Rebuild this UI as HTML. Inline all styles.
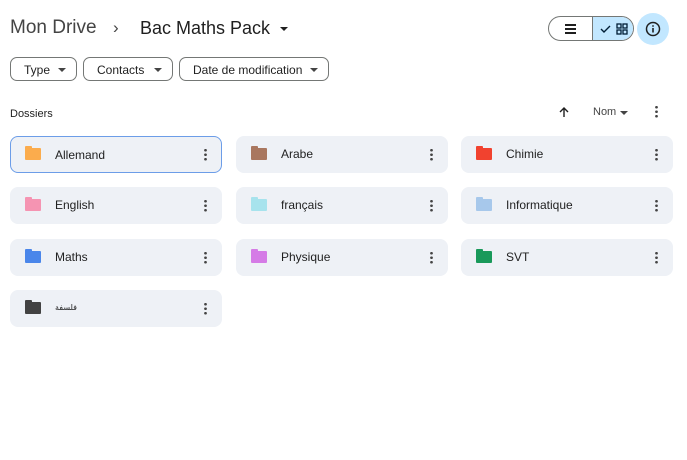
<!DOCTYPE html>
<html><head><meta charset="utf-8"><style>
body{margin:0;width:687px;height:460px;background:#fff;font-family:"Liberation Sans","Noto Sans CJK SC",sans-serif;color:#1f1f1f;position:relative;overflow:hidden}
.a{position:absolute}
.bc{top:17px;font-size:19px;color:#1f1f1f}
.chip{position:absolute;top:57px;height:24px;border:1px solid #747775;border-radius:7px;font-size:12px;line-height:24px;box-sizing:border-box;padding-left:13px;color:#1f1f1f}
.chip:after{content:"";position:absolute;right:10px;top:10px;border:4px solid transparent;border-top:4px solid #444;border-bottom:0}
.card{position:absolute;width:212px;height:37px;background:#eef1f6;border-radius:8px;box-sizing:border-box}
.card .f{position:absolute;left:15px;top:12px;width:16px;height:12px;border-radius:1px}
.card .f:before{content:"";position:absolute;left:0;top:-2px;width:7px;height:3px;background:inherit;border-radius:1px 1px 0 0}
.card .t{position:absolute;left:45px;top:11px;font-size:12px;color:#1f1f1f}
.card .d{position:absolute;right:15px;top:12px;width:3px;height:13px;background:radial-gradient(circle,#444 1.2px,transparent 1.5px) 0 0/3px 4.5px}
</style></head><body>
<div class="a bc" style="left:10px;color:#444">Mon Drive</div>
<div class="a bc" style="left:113px;font-size:17px;top:18px;color:#444">›</div>
<div class="a bc" style="left:140px;font-size:18px;top:18px">Bac Maths Pack</div>
<div class="a" style="left:280px;top:27px;border:4px solid transparent;border-top:4px solid #1f1f1f;border-bottom:0"></div>
<div class="a" style="left:548px;top:16px;width:86px;height:25px;border:1px solid #747775;border-radius:13px;box-sizing:border-box;overflow:hidden">
 <div class="a" style="left:43px;top:0;width:43px;height:25px;background:#c2e7ff;border-left:1px solid #747775"></div>
 <div class="a" style="left:16px;top:7px;width:11px;height:2px;background:#1f1f1f;box-shadow:0 4px 0 #1f1f1f,0 8px 0 #1f1f1f"></div>
 <svg class="a" style="left:51px;top:6px" width="30" height="12"><path d="M1 6l3 3 6-6" fill="none" stroke="#001d35" stroke-width="1.4"/><rect x="17" y="1" width="4" height="4" fill="none" stroke="#001d35" stroke-width="1.3"/><rect x="23" y="1" width="4" height="4" fill="none" stroke="#001d35" stroke-width="1.3"/><rect x="17" y="7" width="4" height="4" fill="none" stroke="#001d35" stroke-width="1.3"/><rect x="23" y="7" width="4" height="4" fill="none" stroke="#001d35" stroke-width="1.3"/></svg>
</div>
<div class="a" style="left:637px;top:13px;width:32px;height:32px;border-radius:50%;background:#c2e7ff"></div>
<svg class="a" style="left:645px;top:21px" width="16" height="16"><circle cx="8" cy="8" r="6.5" fill="none" stroke="#1f1f1f" stroke-width="1.5"/><rect x="7.2" y="7" width="1.6" height="4.5" fill="#1f1f1f"/><circle cx="8" cy="5" r="0.9" fill="#1f1f1f"/></svg>
<div class="chip" style="left:10px;width:67px">Type</div>
<div class="chip" style="left:83px;width:90px">Contacts</div>
<div class="chip" style="left:179px;width:150px">Date de modification</div>
<div class="a" style="left:10px;top:108px;font-size:11px">Dossiers</div>
<svg class="a" style="left:558px;top:106px" width="12" height="12"><path d="M6 11V2M2 6l4-4 4 4" fill="none" stroke="#1f1f1f" stroke-width="1.4"/></svg>
<div class="a" style="left:593px;top:106px;font-size:11px;color:#444">Nom</div>
<div class="a" style="left:620px;top:111px;border:4px solid transparent;border-top:4px solid #444;border-bottom:0"></div>
<div class="a" style="left:655px;top:105px;width:3px;height:13px;background:radial-gradient(circle,#444 1.2px,transparent 1.5px) 0 0/3px 4.5px"></div>

<div class="card" style="left:10px;top:136px;border:1px solid #6c9de8"><div class="f" style="background:#fbac4d;left:14px;top:11px"></div><div class="t" style="left:44px;top:11px">Allemand</div><div class="d" style="right:14px;top:11px"></div></div>
<div class="card" style="left:236px;top:136px"><div class="f" style="background:#a9775f"></div><div class="t">Arabe</div><div class="d"></div></div>
<div class="card" style="left:461px;top:136px"><div class="f" style="background:#f1422f"></div><div class="t">Chimie</div><div class="d"></div></div>
<div class="card" style="left:10px;top:187px"><div class="f" style="background:#f594b2"></div><div class="t">English</div><div class="d"></div></div>
<div class="card" style="left:236px;top:187px"><div class="f" style="background:#a7e3ed"></div><div class="t">français</div><div class="d"></div></div>
<div class="card" style="left:461px;top:187px"><div class="f" style="background:#a7c8eb"></div><div class="t">Informatique</div><div class="d"></div></div>
<div class="card" style="left:10px;top:239px"><div class="f" style="background:#4a86ea"></div><div class="t">Maths</div><div class="d"></div></div>
<div class="card" style="left:236px;top:239px"><div class="f" style="background:#d57be6"></div><div class="t">Physique</div><div class="d"></div></div>
<div class="card" style="left:461px;top:239px"><div class="f" style="background:#19995a"></div><div class="t">SVT</div><div class="d"></div></div>
<div class="card" style="left:10px;top:290px"><div class="f" style="background:#424242"></div><div class="t" style="font-size:8px;top:13px;font-family:'DejaVu Sans',sans-serif">فلسفة</div><div class="d"></div></div>
</body></html>
